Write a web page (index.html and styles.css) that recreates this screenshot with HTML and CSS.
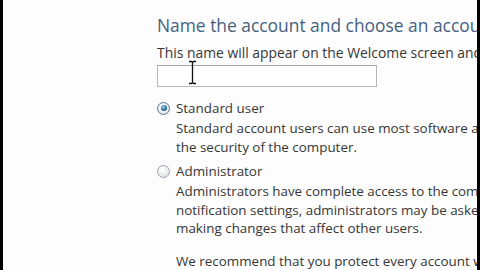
FILE: index.html
```html
<!DOCTYPE html>
<html>
<head>
    <title>Create New Account</title>
    <meta charset="utf-8">
    <link rel="stylesheet" href="styles.css">
</head>
<body>
    <div class="edge"></div>
    <div class="frame">
        <div class="page">
            <h1 class="title">Name the account and choose an account type</h1>
            <p class="intro">This name will appear on the Welcome screen and on the Start menu.</p>
            <div class="name-field">
                <input type="text" class="name-input">
                <svg class="ibeam" width="9" height="25" viewBox="0 0 9 25">
                    <path d="M1 1.5h2.5l1 1 1-1H8M4.5 2.5v20M1 23.5h2.5l1-1 1 1H8" fill="none" stroke="#111" stroke-width="1.3"/>
                </svg>
            </div>

            <div class="option">
                <div class="option-head">
                    <span class="radio checked"></span>
                    <span class="option-label">Standard user</span>
                </div>
                <p class="option-desc">Standard account users can use most software and change system settings that do not affect other users or<br>the security of the computer.</p>
            </div>

            <div class="option option-admin">
                <div class="option-head">
                    <span class="radio"></span>
                    <span class="option-label">Administrator</span>
                </div>
                <p class="option-desc">Administrators have complete access to the computer and can make any desired changes. Depending on<br>notification settings, administrators may be asked to provide their password or confirmation before<br>making changes that affect other users.</p>
            </div>

            <p class="option-desc note">We recommend that you protect every account with a strong password.</p>
        </div>
    </div>
    <div class="edge"></div>
</body>
</html>
```

FILE: styles.css
```css
body {
    margin: 0;
    height: 270px;
    display: flex;
    font-family: 'Open Sans', sans-serif;
    color: #363636;
    background-color: #fdfdfd;
}

.edge {
    flex: 0 0 3px;
    background-color: #000;
}

.frame {
    flex: 1;
    min-width: 0;
    background-color: #fdfdfd;
    overflow: hidden;
}

.page {
    padding: 13px 0 0 154px;
    white-space: nowrap;
}

.title {
    margin: 0;
    font-size: 17.4px;
    font-weight: normal;
    color: #45617f;
    line-height: 24px;
}

.intro {
    margin: 7px 0 0 0;
    font-size: 13.9px;
    line-height: 18px;
}

.name-field {
    position: relative;
    margin-top: 3px;
}

.name-input {
    width: 220px;
    height: 22px;
    border: 1px solid #b8b8b8;
    border-top-color: #a4a4a4;
    background: #fff;
    box-sizing: border-box;
    display: block;
    margin: 0;
}

.ibeam {
    position: absolute;
    left: 31px;
    top: -5px;
}

.option {
    margin-top: 12px;
}

.option-admin {
    margin-top: 6px;
}

.option-head {
    display: flex;
    align-items: center;
    gap: 6px;
    font-size: 13.4px;
    line-height: 18px;
}

.radio {
    width: 11px;
    height: 11px;
    border-radius: 50%;
    border: 1px solid #9aa4ad;
    background: radial-gradient(circle at 40% 35%, #fff 0%, #e4e6e8 70%, #d0d3d6 100%);
    position: relative;
}

.radio.checked {
    border-color: #5b7a96;
}

.radio.checked::after {
    content: "";
    position: absolute;
    left: 2.5px;
    top: 2.5px;
    width: 6px;
    height: 6px;
    border-radius: 50%;
    background: radial-gradient(circle at 40% 35%, #9fd0ee 0%, #2d6fa0 55%, #1d4a70 100%);
}

.option-desc {
    margin: 2px 0 0 19px;
    font-size: 13.4px;
    line-height: 18.5px;
}

.note {
    margin-top: 14px;
}
```
